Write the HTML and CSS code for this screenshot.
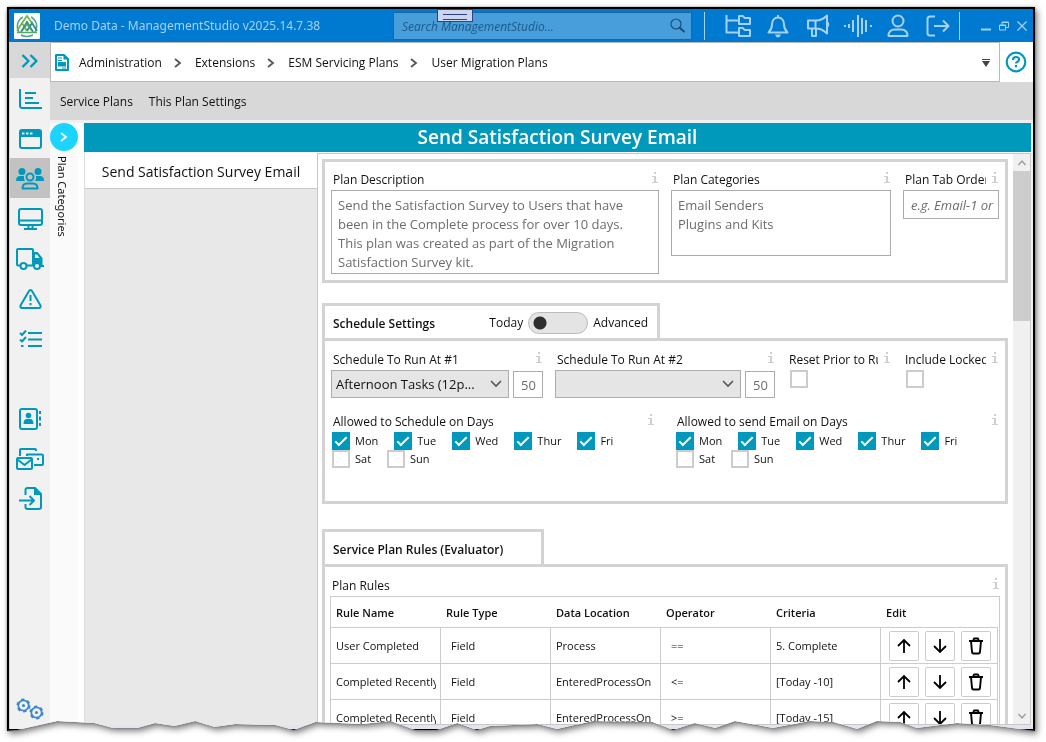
FILE: index.html
```html
<!DOCTYPE html>
<html lang="en">
<head>
<meta charset="utf-8">
<meta name="viewport" content="width=device-width, initial-scale=1">
<title>Demo Data - ManagementStudio</title>
<link rel="stylesheet" href="styles.css">
</head>
<body>
<svg class="defs" aria-hidden="true">
  <symbol id="info" viewBox="0 0 6 12"><path d="M2 0h2v2H2zM0 4h4v6h2v1H0v-1h2V5H0z" fill="currentColor"/></symbol>
  <symbol id="down" viewBox="0 0 12 8"><path d="M1 1l5 5 5-5" fill="none" stroke="#555" stroke-width="1.6"/></symbol>
  <symbol id="right" viewBox="0 0 8 12"><path d="M1 2l5 4-5 4" fill="none" stroke="currentColor" stroke-width="1.8"/></symbol>
  <symbol id="arrow-up" viewBox="0 0 16 16"><path d="M8 15V2M2 8l6-6 6 6" fill="none" stroke="#000" stroke-width="1.8"/></symbol>
  <symbol id="arrow-down" viewBox="0 0 16 16"><path d="M8 1v13M2 8l6 6 6-6" fill="none" stroke="#000" stroke-width="1.8"/></symbol>
  <symbol id="trash" viewBox="0 0 16 18"><path d="M1 4h14M5 4l1-2.5h4L11 4M3 4l1 11q.2 1.500 1.500 1.500h5q1.300 0 1.500-1.500l1-11" fill="none" stroke="#000" stroke-width="1.900" stroke-linejoin="round"/></symbol>
</svg>
<div class="shadow">
<div class="window">
  <header class="titlebar">
    <svg class="logo" viewBox="0 0 26 26" aria-hidden="true"><rect width="26" height="26" rx="1" fill="#fff"/><path d="M5 19A10.500 10.500 0 0 1 9 4M17 4a10.500 10.500 0 0 1 4 15M7 22q6 3 12 0" fill="none" stroke="#4ba7a0" stroke-width="1.500"/><path d="M3 18l5-8 5 8M8 10l5-7 5 7" fill="none" stroke="#6fb844" stroke-width="1.800"/><path d="M13 18l5-8 5 8M7 19l6-10 6 10" fill="none" stroke="#2f8f86" stroke-width="1.800"/><path d="M3 19.500h20M9 17l4-6 4 6" fill="none" stroke="#55a869" stroke-width="1.500"/></svg>
    <h1 class="app-title">Demo Data - ManagementStudio v2025.14.7.38</h1>
    <div class="search">
      <input class="search-input" type="text" aria-label="Search" placeholder="Search ManagementStudio...">
      <svg width="16" height="16" viewBox="0 0 16 16" fill="none" stroke="#17517c"><circle cx="6" cy="6" r="5" stroke-width="1.200"/><path d="M9.500 9.500l5 4.500" stroke-width="2.200"/></svg>
      <span class="grip"></span>
    </div>
    <nav class="tools" aria-label="Tools">
      <button class="tool" aria-label="Folders"><svg width="26" height="24" viewBox="0 0 26 24"><path d="M1.500 1v17.500H13M1.500 6.500H13M14 2h4l1.500 2H25v6H14zM14 14h4l1.500 2H25v6H14z"/></svg></button>
      <button class="tool" aria-label="Notifications"><svg width="22" height="24" viewBox="0 0 22 24"><path d="M11 1v2M1.500 18.500h19c-2-2-3.500-4-3.500-8 0-4-2.500-7-6-7s-6 3-6 7c0 4-1.500 6-3.500 8z"/><path d="M8 20.500h6q-1 3-3 3t-3-3z" fill="#a6d1f1" stroke="none"/></svg></button>
      <button class="tool" aria-label="Announcements"><svg width="24" height="24" viewBox="0 0 24 24"><path d="M2 6.500h8q6 0 11-5v18q-5-5-11-5H2zM6 15v7h4v-7.500M9.500 7v7M21 8q2.500 2.500 0 5"/></svg></button>
      <button class="tool" aria-label="Activity"><svg width="28" height="24" viewBox="0 0 28 24"><path d="M0 12h2M5 10v4M9 6v12M14 1v22M18 4v16M22 6v12M26 12h2"/></svg></button>
      <button class="tool" aria-label="Profile"><svg width="22" height="24" viewBox="0 0 22 24"><circle cx="11" cy="7" r="5.500"/><path d="M1.500 22q0-6.500 6.500-6.500h6q6.500 0 6.500 6.500z"/></svg></button>
      <button class="tool" aria-label="Log out"><svg width="24" height="22" viewBox="0 0 24 22"><path d="M9 1.500H4q-2.500 0-2.500 2.500v14q0 2.500 2.500 2.500h5M8 11h14M17 5.500l5.500 5.500-5.500 5.500"/></svg></button>
    </nav>
    <div class="window-buttons">
      <button class="wbtn" aria-label="Minimize"><svg width="10" height="12" viewBox="0 0 10 12"><path d="M0 9.500h10" stroke-width="2"/></svg></button>
      <button class="wbtn" aria-label="Restore"><svg width="10" height="10" viewBox="0 0 10 10"><path d="M.5 4h6v5h-6zM3 4V1h6.500v5.500h-3M3 1.500h6.500M.5 4.500h6"/></svg></button>
      <button class="wbtn" aria-label="Close"><svg width="10" height="10" viewBox="0 0 10 10"><path d="M.5.5l9 9M9.500.5l-9 9" stroke-width="1.300"/></svg></button>
    </div>
  </header>

  <div class="body">
    <nav class="rail" aria-label="Modules">
      <button class="rail-item expand" aria-label="Expand menu"><svg width="18" height="14" viewBox="0 0 18 14"><path d="M1.500 1l6 6-6 6M9.500 1l6 6-6 6" stroke-width="2.400"/></svg></button>
      <button class="rail-item" aria-label="Dashboard"><svg width="23" height="20" viewBox="0 0 23 20"><path d="M1 0v16.500q0 2.500 2.500 2.500H23M6 4h11M6 9h8M6 14h14"/></svg></button>
      <button class="rail-item" aria-label="Applications"><svg width="23" height="20" viewBox="0 0 23 20"><rect x="1" y="1" width="21" height="18" rx="2"/><path d="M1 2h21v6H1z" fill="#0099bc" stroke="none"/><path d="M3 4.500h2.500M7 4.500h2.500M11 4.500h2.500" stroke="#d5eef4"/></svg></button>
      <button class="rail-item selected" aria-label="Users"><svg width="28" height="24" viewBox="0 0 28 24"><g fill="#0099bc" stroke="none"><circle cx="6" cy="4.500" r="3.500"/><circle cx="22" cy="4.500" r="3.500"/><path d="M0 14q0-5 4-5h4q-.5 3 1 5zM28 14q0-5-4-5h-4q.5 3-1 5z"/></g><circle cx="14" cy="10" r="3.500"/><path d="M6.500 21.500q0-5 4.500-5h6q4.500 0 4.500 5z"/></svg></button>
      <button class="rail-item" aria-label="Devices"><svg width="25" height="22" viewBox="0 0 25 22"><rect x="1" y="1" width="23" height="16" rx="2"/><path d="M1 12.500h23M10.500 17v4M14.500 17v4M6 21h13"/></svg></button>
      <button class="rail-item" aria-label="Deployments"><svg width="28" height="22" viewBox="0 0 28 22"><path d="M4 17.500H2q-1 0-1-1V2q0-1 1-1h14q1 0 1 1v15.500h-6"/><path d="M17 4h4.500l5 6v8H17z" fill="#0099bc" stroke="none"/><path d="M19 6.500h2l2.500 3.500H19z" fill="#f1f1f1" stroke="none"/><circle cx="7.500" cy="18" r="3" fill="#f1f1f1"/><circle cx="21" cy="18" r="3" fill="#f1f1f1"/><path d="M24 18h4"/></svg></button>
      <button class="rail-item" aria-label="Issues"><svg width="23" height="20" viewBox="0 0 23 20"><path d="M11.500 1q1 0 1.500 1l8.500 14.500q.5 2.500-1.500 2.500H3q-2 0-1.500-2.500L10 2q.5-1 1.500-1zM11.500 6v6M11.500 14v2.200"/></svg></button>
      <button class="rail-item" aria-label="Tasks"><svg width="23" height="18" viewBox="0 0 23 18"><path d="M9 3h14M9 9.500h14M9 16h14M1 3l2 2 4-4.500M1 9.500l2 2L7 7M2 16h2.500"/></svg></button>
      <span class="rail-gap"></span>
      <button class="rail-item" aria-label="Contacts"><svg width="22" height="22" viewBox="0 0 22 22"><rect x="1" y="1" width="17" height="20" rx="2"/><circle cx="9.500" cy="7.500" r="2.800" fill="#0099bc" stroke="none"/><path d="M4.500 16q0-5 3.500-5h3q3.500 0 3.500 5z" fill="#0099bc" stroke="none"/><path d="M21 3v3M21 8.500v4M21 15v3"/></svg></button>
      <button class="rail-item" aria-label="Mail"><svg width="28" height="22" viewBox="0 0 28 22"><path d="M4 8V2q0-1 1-1h14q1 0 1 1v1M11 8V6.500h15q1 0 1 1V16q0 1-1 1h-8"/><rect x="1" y="10" width="15" height="11" rx="1"/><path d="M1.500 11.500l7 5.500 7-5.500M22 10v2"/></svg></button>
      <button class="rail-item" aria-label="Import"><svg width="23" height="23" viewBox="0 0 23 23"><path d="M6.500 8V3q0-2 2-2H16l6 6v13q0 2-2 2H8.500q-2 0-2-2v-3M0 13.500h14M10.500 9l4.500 4.500-4.500 4.500"/><path d="M15 1v7h7z" fill="#0099bc" stroke="none"/></svg></button>
      <button class="rail-item settings" aria-label="Settings"><svg width="28" height="22" viewBox="0 0 28 22"><circle cx="7.500" cy="7.500" r="5.200" stroke-width="1.800"/><circle cx="7.500" cy="7.500" r="6.300" stroke-width="1.500" stroke-dasharray="3.300 3.300"/><circle cx="7.500" cy="7.500" r="1.500" fill="#3c86cc" stroke="none"/><circle cx="20.500" cy="14.500" r="5.200" stroke-width="1.800"/><circle cx="20.500" cy="14.500" r="6.300" stroke-width="1.500" stroke-dasharray="3.300 3.300"/><circle cx="20.500" cy="14.500" r="1.500" fill="#3c86cc" stroke="none"/></svg></button>
    </nav>

    <div class="workspace">
      <div class="crumb-row">
        <nav class="crumbs" aria-label="Breadcrumb">
          <svg class="doc" width="14" height="17" viewBox="0 0 14 17"><path d="M2 1h7l4 4v11H1V1z" fill="#fff" stroke="#0099bc" stroke-width="2" stroke-linejoin="round"/><path d="M8.500 1v4.500H13zM3 8h8v4.500H3z" fill="#0099bc"/><path d="M3 4h4M3 6.500h4M5 10h4M7 14h4" stroke="#0099bc" stroke-width="1.200"/></svg>
          <a class="crumb" href="#">Administration</a><svg class="sep"><use href="#right"/></svg>
          <a class="crumb" href="#">Extensions</a><svg class="sep"><use href="#right"/></svg>
          <a class="crumb" href="#">ESM Servicing Plans</a><svg class="sep"><use href="#right"/></svg>
          <a class="crumb" href="#">User Migration Plans</a>
          <button class="crumb-menu" aria-label="History"><svg width="8" height="8" viewBox="0 0 8 8"><path d="M0 0h8v1H0zM0 2h8L4 8z" fill="#444"/></svg></button>
        </nav>
        <button class="help" aria-label="Help"><svg width="22" height="22" viewBox="0 0 22 22" fill="none" stroke="#0099bc" stroke-width="2.200"><circle cx="11" cy="11" r="9.300"/><path d="M8 9q0-3 3-3t3 2.500q0 1.500-1.500 2.200T11 12.500M11 14v2.300"/></svg></button>
      </div>
      <nav class="submenu" aria-label="Plans"><a class="sub-link" href="#">Service Plans</a><a class="sub-link" href="#">This Plan Settings</a></nav>

      <div class="stage">
        <aside class="drawer"><button class="drawer-toggle" aria-label="Show plan categories"><svg width="8" height="12"><use href="#right"/></svg></button><span class="drawer-label">Plan Categories</span></aside>
        <main class="main">
          <h2 class="page-title">Send Satisfaction Survey Email</h2>
          <div class="split">
            <div class="plan-list"><button class="plan">Send Satisfaction Survey Email</button></div>
            <div class="detail">
              <div class="form">
                <section class="panel grid-about">
                  <div class="field"><div class="field-head"><label for="desc">Plan Description</label><svg class="info"><use href="#info"/></svg></div>
                    <textarea class="box desc" id="desc">Send the Satisfaction Survey to Users that have been in the Complete process for over 10 days. This plan was created as part of the Migration Satisfaction Survey kit.</textarea></div>
                  <div class="field"><div class="field-head"><label for="cats">Plan Categories</label><svg class="info"><use href="#info"/></svg></div>
                    <textarea class="box cats" id="cats">Email Senders
Plugins and Kits</textarea></div>
                  <div class="field"><div class="field-head"><label for="order">Plan Tab Order</label><svg class="info"><use href="#info"/></svg></div>
                    <input class="box order" id="order" type="text" placeholder="e.g. Email-1 or Email-2"></div>
                </section>

                <div class="tab tab-schedule"><h3 class="tab-title">Schedule Settings</h3>
                  <label class="mode"><span>Today</span><input class="switch" type="checkbox"><span>Advanced</span></label></div>
                <section class="panel schedule">
                  <div class="grid-runs">
                    <div class="field"><div class="field-head"><label for="run1">Schedule To Run At #1</label><svg class="info"><use href="#info"/></svg></div>
                      <div class="run"><span class="picker"><select class="select" id="run1"><option>Afternoon Tasks (12p...</option></select><svg class="caret"><use href="#down"/></svg></span><input class="box count" type="text" value="50" aria-label="Limit #1"></div></div>
                    <div class="field"><div class="field-head"><label for="run2">Schedule To Run At #2</label><svg class="info"><use href="#info"/></svg></div>
                      <div class="run"><span class="picker"><select class="select" id="run2"><option></option></select><svg class="caret"><use href="#down"/></svg></span><input class="box count" type="text" value="50" aria-label="Limit #2"></div></div>
                    <div class="field"><div class="field-head"><label for="reset">Reset Prior to Run</label><svg class="info"><use href="#info"/></svg></div><input class="check lone" id="reset" type="checkbox"></div>
                    <div class="field"><div class="field-head"><label for="locked">Include Locked</label><svg class="info"><use href="#info"/></svg></div><input class="check lone" id="locked" type="checkbox"></div>
                  </div>
                  <div class="grid-days">
                    <div class="field"><div class="field-head"><span>Allowed to Schedule on Days</span><svg class="info"><use href="#info"/></svg></div>
                      <div class="days">
                        <label class="day"><input class="check" type="checkbox" checked>Mon</label><label class="day"><input class="check" type="checkbox" checked>Tue</label><label class="day"><input class="check" type="checkbox" checked>Wed</label><label class="day"><input class="check" type="checkbox" checked>Thur</label><label class="day"><input class="check" type="checkbox" checked>Fri</label><label class="day"><input class="check" type="checkbox">Sat</label><label class="day"><input class="check" type="checkbox">Sun</label>
                      </div></div>
                    <div class="field"><div class="field-head"><span>Allowed to send Email on Days</span><svg class="info"><use href="#info"/></svg></div>
                      <div class="days">
                        <label class="day"><input class="check" type="checkbox" checked>Mon</label><label class="day"><input class="check" type="checkbox" checked>Tue</label><label class="day"><input class="check" type="checkbox" checked>Wed</label><label class="day"><input class="check" type="checkbox" checked>Thur</label><label class="day"><input class="check" type="checkbox" checked>Fri</label><label class="day"><input class="check" type="checkbox">Sat</label><label class="day"><input class="check" type="checkbox">Sun</label>
                      </div></div>
                  </div>
                </section>

                <div class="tab tab-rules"><h3 class="tab-title">Service Plan Rules (Evaluator)</h3></div>
                <section class="panel rules-panel">
                  <div class="field-head"><span>Plan Rules</span><svg class="info"><use href="#info"/></svg></div>
                  <div class="table-box">
                  <table class="rules">
                    <colgroup><col class="c"><col class="c"><col class="c"><col class="c"><col class="c"><col></colgroup>
                    <thead><tr><th>Rule Name</th><th>Rule Type</th><th>Data Location</th><th>Operator</th><th>Criteria</th><th>Edit</th></tr></thead>
                    <tbody>
                      <tr><td><span class="cell">User Completed</span></td><td class="inset">Field</td><td><span class="cell">Process</span></td><td class="inset">==</td><td>5. Complete</td><td><span class="actions"><button class="act" aria-label="Move up"><svg><use href="#arrow-up"/></svg></button><button class="act" aria-label="Move down"><svg><use href="#arrow-down"/></svg></button><button class="act" aria-label="Delete"><svg><use href="#trash"/></svg></button></span></td></tr>
                      <tr><td><span class="cell">Completed Recently</span></td><td class="inset">Field</td><td><span class="cell">EnteredProcessOn</span></td><td class="inset">&lt;=</td><td>[Today -10]</td><td><span class="actions"><button class="act" aria-label="Move up"><svg><use href="#arrow-up"/></svg></button><button class="act" aria-label="Move down"><svg><use href="#arrow-down"/></svg></button><button class="act" aria-label="Delete"><svg><use href="#trash"/></svg></button></span></td></tr>
                      <tr><td><span class="cell">Completed Recently</span></td><td class="inset">Field</td><td><span class="cell">EnteredProcessOn</span></td><td class="inset">&gt;=</td><td>[Today -15]</td><td><span class="actions"><button class="act" aria-label="Move up"><svg><use href="#arrow-up"/></svg></button><button class="act" aria-label="Move down"><svg><use href="#arrow-down"/></svg></button><button class="act" aria-label="Delete"><svg><use href="#trash"/></svg></button></span></td></tr>
                    </tbody>
                  </table>
                  </div>
                </section>
              </div>
              <div class="scrollbar">
                <button class="scroll-btn" aria-label="Scroll up"><svg width="8" height="6" viewBox="0 0 8 6"><path d="M.5 5L4 1l3.500 4"/></svg></button>
                <div class="track"><div class="thumb"></div></div>
                <button class="scroll-btn" aria-label="Scroll down"><svg width="8" height="6" viewBox="0 0 8 6"><path d="M.5 1L4 5l3.500-4"/></svg></button>
              </div>
            </div>
          </div>
        </main>
      </div>
    </div>
  </div>
</div>
</div>
</body>
</html>
```
FILE: styles.css
```css
* { box-sizing: border-box; }
body {
  margin: 0;
  background: #fff;
  color: #111;
  font: 12px/16px "Open Sans", "Noto Sans", sans-serif;
}
button, input, textarea, select { font: inherit; color: inherit; margin: 0; border-radius: 0; }
button { background: none; border: 0; padding: 0; display: grid; place-items: center; }
a { color: inherit; text-decoration: none; }
h1, h2, h3 { margin: 0; font-weight: 400; }
svg { display: block; flex: none; }
.defs { position: absolute; width: 0; height: 0; }

.shadow {
  height: 100vh;
  padding: 7px 11px 11px 7px;
  filter: drop-shadow(0 0 1px rgba(0, 0, 0, .35)) drop-shadow(2px 3px 3px rgba(0, 0, 0, .5));
}
/* Torn lower edge of the window */
.window {
  height: 100%;
  display: flex;
  flex-direction: column;
  border: 2px solid #000;
  background: #fff;
  clip-path: polygon(0 0, 100% 0, 100% 100%, 95.600% calc(100% - 6px), 92.400% calc(100% - 8px), 88.500% calc(100% - 3px), 86.900% calc(100% - 9px), 84.600% calc(100% - 10px), 82.700% calc(100% - 2px), 80.400% calc(100% - 9px), 78.100% calc(100% - 10px), 74.500% calc(100% - 3px), 70.800% calc(100% - 10px), 68.900% calc(100% - 3px), 66.900% calc(100% - 8px), 64.800% calc(100% - 1px), 62.800% calc(100% - 9px), 57% calc(100% - 10px), 53.500% calc(100% - 2px), 51.600% calc(100% - 7px), 47% calc(100% - 5px), 45.700% calc(100% - 1px), 43.800% calc(100% - 8px), 41.800% calc(100% - 1px), 39.700% calc(100% - 1px), 37.300% calc(100% - 10px), 34.600% calc(100% - 7px), 30% calc(100% - 9px), 27.900% calc(100% - 1px), 26.100% calc(100% - 6px), 22.200% calc(100% - 7px), 20.200% calc(100% - 4px), 18.300% calc(100% - 10px), 16.300% calc(100% - 5px), 14.400% calc(100% - 8px), 12.700% calc(100% - 3px), 10.300% calc(100% - 3px), 8.500% calc(100% - 8px), 4.900% calc(100% - 10px), 1% calc(100% - 1px), 0 100%);
}

.titlebar { display: flex; align-items: center; height: 33px; padding: 0 2px 0 5px; background: #0079d0; color: #a6d1f1; flex: none; }
.logo { width: 26px; height: 26px; }
.app-title { flex: 1; padding-left: 14px; font-family: "Noto Sans", "Open Sans", sans-serif; font-size: 12px; white-space: nowrap; overflow: hidden; }
.search { position: relative; display: flex; align-items: center; width: 299px; height: 28px; padding: 0 5px 0 8px; background: #489ddb; border: 1px solid #1668a8; }
.search-input { flex: 1; min-width: 0; padding: 2px 0 0; border: 0; background: none; outline: 0; font-style: italic; }
.search-input::placeholder { color: #1c5a88; opacity: 1; }
.grip { position: absolute; left: 43px; top: -4px; width: 36px; height: 13px; background: #ccd5f0; border: 1px solid #32417f; }
.grip::after { content: ""; display: block; margin: 4px 5px; height: 4px; border: solid #32417f; border-width: 1px 0; }
.tools { display: flex; margin-left: 12px; padding: 0 1px 0 13px; border-left: 1px solid #a6d1f1; }
.tool { width: 40px; height: 28px; }
.tool svg { fill: none; stroke: #a6d1f1; stroke-width: 2; stroke-linejoin: round; }
.window-buttons { display: flex; padding-left: 17px; height: 28px; border-left: 1px solid #a6d1f1; }
.wbtn { width: 18px; }
.wbtn svg { fill: none; stroke: #a6d1f1; }

.body { flex: 1; min-height: 0; display: flex; }
.rail { width: 41px; flex: none; display: flex; flex-direction: column; background: #f1f1f1; border-left: 1px solid #d4d4e0; }
.rail-item { height: 40px; flex: none; padding-top: 1px; }
.rail-item svg { fill: none; stroke: #0099bc; stroke-width: 2; stroke-linejoin: round; }
.expand { height: 36px; background: #d8d8d8; }
.selected { background: #c2c2c2; }
.rail-gap { height: 40px; flex: none; }
.settings { margin-top: auto; margin-bottom: 1px; }
.settings svg { stroke: #3c86cc; }

.workspace { flex: 1; min-width: 0; display: flex; flex-direction: column; padding-bottom: 4px; background: #e4e4ee; }
.crumb-row { display: flex; height: 40px; flex: none; background: #f0f0f0; }
.crumbs { flex: 1; display: flex; align-items: center; padding: 1px 8px 0 4px; background: #fff; border: 1px solid #b9b9b9; }
.doc { margin-right: 10px; }
.crumb, .sub-link { white-space: nowrap; }
.sep { width: 8px; height: 12px; margin: 0 13px 0 12px; color: #555; }
.crumb-menu { margin-left: auto; width: 10px; }
.help { width: 33px; padding-right: 2px; background: #fff; }
.submenu { display: flex; align-items: center; gap: 16px; height: 38px; flex: none; padding: 2px 0 0 10px; background: #d8d8d8; }

.stage { flex: 1; min-height: 0; display: flex; padding-top: 3px; background: #f0f0f0; }
.drawer { width: 34px; flex: none; display: flex; flex-direction: column; padding-right: 6px; background: linear-gradient(90deg, #fafafa 28px, #fff 28px); }
.drawer-toggle { width: 28px; height: 28px; border-radius: 50%; background: #1bd4ff; color: #fff; }
.drawer-label { align-self: flex-start; writing-mode: vertical-rl; margin: 5px 0 0 4px; font-family: "Noto Sans", "Open Sans", sans-serif; font-size: 11px; }
.main { flex: 1; min-width: 0; display: flex; flex-direction: column; margin-right: 2px; }
.page-title { flex: none; height: 29px; line-height: 29px; background: #0099bc; color: #fff; font-size: 19px; font-weight: 600; text-align: center; }
.split { flex: 1; min-height: 0; display: flex; background: #fff; }
.plan-list { width: 233px; flex: none; background: #e8e8e8; border-left: 1px solid #ddd; }
.plan { width: 100%; height: 37px; padding-top: 3px; background: #fff; border-bottom: 1px solid #c8c8c8; font-size: 14px; white-space: nowrap; }
.detail { flex: 1; min-width: 0; display: flex; margin-top: 1px; border: 1px solid #c8c8c8; background: #fff; }
.form { flex: 1; min-width: 0; overflow: hidden; padding: 5px 5px 0 4px; }

.panel { border: 3px solid #d3d3d3; padding: 10px 6px 6px; }
.grid-about { display: grid; grid-template-columns: 328fr 220fr 96fr; gap: 12px; min-height: 124px; }
.field { min-width: 0; }
.field-head { display: flex; justify-content: space-between; gap: 6px; height: 16px; margin-bottom: 2px; padding: 0 1px 0 2px; white-space: nowrap; }
.field-head > :first-child { overflow: hidden; }
.info { width: 6px; height: 12px; color: #cfcfcf; }
.box { display: block; width: 100%; border: 1px solid #acacac; background: #fff; color: #6d6d6d; font-size: 13px; line-height: 19px; outline: 0; }
.desc, .cats { padding: 5px 20px 5px 6px; resize: none; overflow: hidden; }
.desc { height: 84px; }
.cats { height: 66px; }
.order { height: 29px; padding: 0 4px 0 7px; font-style: italic; }
.order::placeholder { color: #6d6d6d; opacity: 1; }

.tab { display: flex; align-items: center; justify-content: space-between; height: 35px; padding: 2px 9px 0 8px; border: solid #d3d3d3; border-width: 3px 3px 0; }
.tab-schedule { width: 338px; margin-top: 20px; }
.tab-rules { width: 222px; margin-top: 25px; }
.tab-title { padding-top: 2px; font-size: 12px; font-weight: 600; white-space: nowrap; }
.mode { display: flex; align-items: center; gap: 5px; }
.switch { appearance: none; width: 60px; height: 22px; border: 1px solid #bbb; border-radius: 11px; background: radial-gradient(circle at 11px 10px, #2e2e2e 6px, #e4e4e4 7px); }
.schedule { padding-top: 11px; min-height: 166px; }
.grid-runs { display: grid; grid-template-columns: 212fr 220fr 104fr 96fr; gap: 12px; }
.run { display: flex; align-items: flex-end; gap: 4px; }
.picker { position: relative; flex: 1; min-width: 0; }
.select { display: block; appearance: none; width: 100%; height: 28px; padding: 0 20px 0 4px; border: 1px solid #acacac; background: #e5e5e5; font-size: 13px; }
.caret { position: absolute; right: 7px; top: 10px; width: 12px; height: 8px; pointer-events: none; }
.count { width: 30px; height: 27px; padding: 0 0 0 7px; }
.check { appearance: none; flex: none; display: grid; place-items: center; width: 18px; height: 18px; border: 2px solid #ccc; background: #fff; }
.check:checked { background: #0099bc; border-color: #0099bc; }
.check:checked::after { content: ""; width: 10px; height: 4px; margin-top: -3px; border: solid #fff; border-width: 0 0 2px 2px; rotate: -45deg; }
.lone { margin-left: 3px; }
.grid-days { display: grid; grid-template-columns: 1fr 1fr; gap: 20px; margin-top: 16px; }
.days { display: flex; flex-wrap: wrap; column-gap: 16px; padding-left: 1px; }
.day { display: flex; align-items: center; gap: 5px; font-size: 11px; height: 18px; }

.rules-panel { padding: 11px 5px 6px; }
.table-box { border: 1px solid #ccc; padding-right: 1px; }
.rules { width: 100%; table-layout: fixed; border-collapse: separate; border-spacing: 0; font-size: 11px; }
.c { width: 110px; }
.rules th { height: 31px; padding: 2px 5px 0; border-bottom: 1px solid #ccc; text-align: left; font-weight: 600; }
.rules td { height: 36px; padding: 0 4px 0 5px; border: solid #ccc; border-width: 0 1px 1px 0; white-space: nowrap; }
.rules td.inset { padding-left: 10px; }
.cell { display: block; overflow: hidden; }
.actions { display: flex; gap: 6px; padding-left: 3px; }
.act { width: 30px; height: 30px; border: 1px solid #ccc; border-radius: 2px; background: #fff; }
.act svg { width: 16px; height: 18px; }

.scrollbar { width: 17px; flex: none; display: flex; flex-direction: column; background: #f0f0f0; }
.scroll-btn { height: 17px; flex: none; }
.scroll-btn svg { fill: none; stroke: #999; stroke-width: 1.300; }
.track { flex: 1; }
.thumb { height: 28%; background: #cdcdcd; }
```
